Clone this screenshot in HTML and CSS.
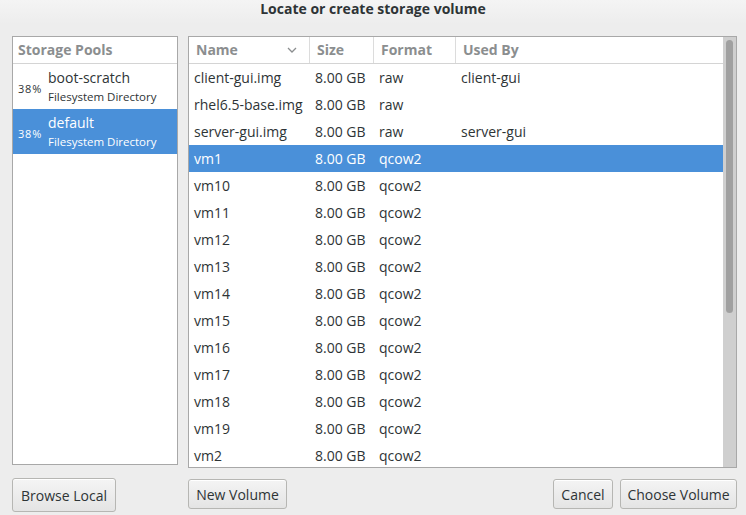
FILE: index.html
```html
<!DOCTYPE html>
<html>
<head>
<meta charset="utf-8">
<link rel="stylesheet" href="styles.css">
</head>
<body>
<div class="window">
  <div class="titlebar">Locate or create storage volume</div>
  <div class="main">
    <div class="pools">
      <div class="pools-head">Storage Pools</div>
      <div class="pool">
        <span class="pct">38%</span>
        <div class="pool-info"><div class="pool-name">boot-scratch</div><div class="pool-type">Filesystem Directory</div></div>
      </div>
      <div class="pool selected">
        <span class="pct">38%</span>
        <div class="pool-info"><div class="pool-name">default</div><div class="pool-type">Filesystem Directory</div></div>
      </div>
    </div>
    <div class="vols">
      <div class="vols-list">
        <div class="vhead">
          <div class="hc c-name">Name<svg class="chev" width="10" height="6" viewBox="0 0 10 6"><path d="M1 1l4 4 4-4" fill="none" stroke="#8b8e8f" stroke-width="1.3"/></svg></div>
          <div class="hc c-size">Size</div>
          <div class="hc c-fmt">Format</div>
          <div class="hc c-used last">Used By</div>
        </div>
        <div class="row"><div class="c-name">client-gui.img</div><div class="c-size">8.00 GB</div><div class="c-fmt">raw</div><div class="c-used">client-gui</div></div>
        <div class="row"><div class="c-name">rhel6.5-base.img</div><div class="c-size">8.00 GB</div><div class="c-fmt">raw</div><div class="c-used"></div></div>
        <div class="row"><div class="c-name">server-gui.img</div><div class="c-size">8.00 GB</div><div class="c-fmt">raw</div><div class="c-used">server-gui</div></div>
        <div class="row selected"><div class="c-name">vm1</div><div class="c-size">8.00 GB</div><div class="c-fmt">qcow2</div><div class="c-used"></div></div>
        <div class="row"><div class="c-name">vm10</div><div class="c-size">8.00 GB</div><div class="c-fmt">qcow2</div><div class="c-used"></div></div>
        <div class="row"><div class="c-name">vm11</div><div class="c-size">8.00 GB</div><div class="c-fmt">qcow2</div><div class="c-used"></div></div>
        <div class="row"><div class="c-name">vm12</div><div class="c-size">8.00 GB</div><div class="c-fmt">qcow2</div><div class="c-used"></div></div>
        <div class="row"><div class="c-name">vm13</div><div class="c-size">8.00 GB</div><div class="c-fmt">qcow2</div><div class="c-used"></div></div>
        <div class="row"><div class="c-name">vm14</div><div class="c-size">8.00 GB</div><div class="c-fmt">qcow2</div><div class="c-used"></div></div>
        <div class="row"><div class="c-name">vm15</div><div class="c-size">8.00 GB</div><div class="c-fmt">qcow2</div><div class="c-used"></div></div>
        <div class="row"><div class="c-name">vm16</div><div class="c-size">8.00 GB</div><div class="c-fmt">qcow2</div><div class="c-used"></div></div>
        <div class="row"><div class="c-name">vm17</div><div class="c-size">8.00 GB</div><div class="c-fmt">qcow2</div><div class="c-used"></div></div>
        <div class="row"><div class="c-name">vm18</div><div class="c-size">8.00 GB</div><div class="c-fmt">qcow2</div><div class="c-used"></div></div>
        <div class="row"><div class="c-name">vm19</div><div class="c-size">8.00 GB</div><div class="c-fmt">qcow2</div><div class="c-used"></div></div>
        <div class="row"><div class="c-name">vm2</div><div class="c-size">8.00 GB</div><div class="c-fmt">qcow2</div><div class="c-used"></div></div>
      </div>
      <div class="scrollbar"><div class="thumb"></div></div>
    </div>
  </div>
  <div class="bottom">
    <div class="bleft"><button class="btn browse">Browse Local</button></div>
    <div class="bright">
      <button class="btn newvol">New Volume</button>
      <div class="actions">
        <button class="btn cancel">Cancel</button>
        <button class="btn choose">Choose Volume</button>
      </div>
    </div>
  </div>
</div>
</body>
</html>
```
FILE: styles.css
```css
* { box-sizing: border-box; }
html, body { margin: 0; padding: 0; }
body {
  width: 746px;
  height: 515px;
  overflow: hidden;
  background: #ededed;
  font-family: "Open Sans", "DejaVu Sans", sans-serif;
  font-size: 14px;
  color: #2e3436;
}
.window { width: 746px; height: 515px; }
.titlebar {
  height: 24px;
  padding-top: 0;
  line-height: 18px;
  text-align: center;
  font-weight: bold;
  font-size: 14px;
  color: #2e3436;
  background: linear-gradient(#f4f4f4, #ededed);
}
.main {
  display: flex;
  gap: 10px;
  padding: 12px 9px 0 12px;
}
.pools {
  width: 166px;
  height: 429px;
  background: #fff;
  border: 1px solid #a8a8a8;
}
.pools-head {
  height: 27px;
  padding-left: 5px;
  line-height: 26px;
  font-weight: bold;
  color: #8b8e8f;
  border-bottom: 1px solid #d4d4d4;
}
.pool {
  height: 45px;
  display: flex;
  align-items: center;
  padding-left: 5px;
}
.pool.selected { background: #4a90d9; color: #fff; }
.pct { font-size: 11px; letter-spacing: 0.8px; width: 30px; padding-top: 3px; }
.pool-info { padding-top: 2px; }
.pool-name { font-size: 14px; line-height: 18px; }
.pool-type { font-size: 11.5px; line-height: 19px; }
.vols {
  flex: 1;
  height: 432px;
  display: flex;
  border: 1px solid #a8a8a8;
  background: #fff;
}
.vols-list { flex: 1; }
.vhead {
  display: flex;
  height: 27px;
  border-bottom: 1px solid #d4d4d4;
  font-weight: bold;
  color: #8b8e8f;
}
.hc {
  line-height: 26px;
  border-right: 1px solid #dcdcdc;
  padding-left: 7px;
  display: flex;
  align-items: center;
}
.hc.last { border-right: none; }
.chev { margin-left: auto; margin-right: 12px; }
.row {
  display: flex;
  height: 27px;
  line-height: 27px;
}
.row > div { padding-left: 5px; white-space: nowrap; }
.row.selected { background: #4a90d9; color: #fff; }
.c-name { width: 121px; }
.c-size { width: 64px; }
.c-fmt { width: 82px; }
.c-used { flex: 1; }
.scrollbar {
  width: 13px;
  background: #cfcfcf;
  padding: 3px 3px 0 3px;
}
.thumb {
  width: 7px;
  height: 273px;
  border-radius: 4px;
  background: #a0a0a0;
}
.bottom {
  display: flex;
  gap: 10px;
  padding: 0 9px 0 12px;
  height: 47px;
}
.bleft { width: 166px; padding-top: 10px; }
.bright {
  flex: 1;
  display: flex;
  justify-content: space-between;
  padding-top: 11px;
}
.actions { display: flex; gap: 7px; }
.btn {
  font-family: inherit;
  font-size: 14px;
  color: #2e3436;
  height: 30px;
  padding: 0 6px;
  border: 1px solid #b6b6b3;
  border-radius: 3px;
  background: linear-gradient(#f4f4f4, #e4e4e4);
  box-shadow: inset 0 1px #fff;
  white-space: nowrap;
}
.browse { width: 104px; height: 34px; }
.newvol { width: 99px; }
.cancel { width: 60px; }
.choose { width: 117px; }
```
